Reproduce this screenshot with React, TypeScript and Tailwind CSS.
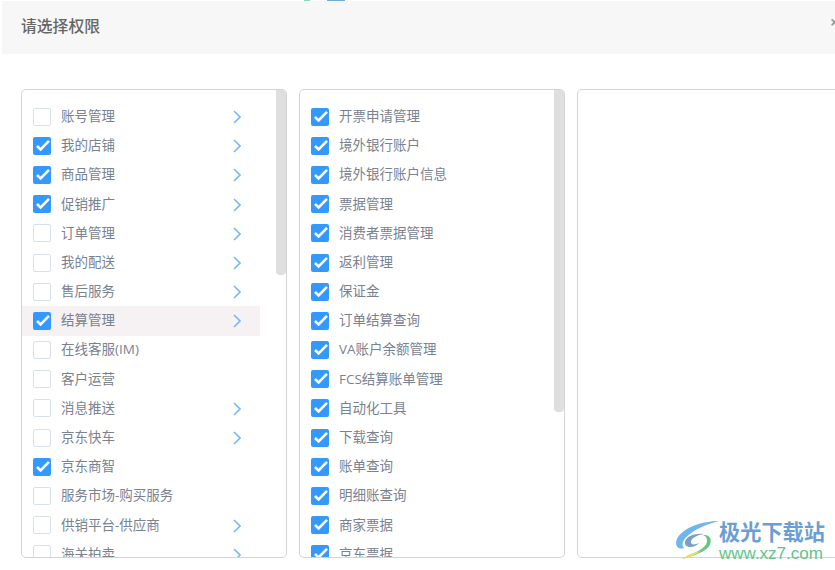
const leftItems = [
  { label: '账号管理', checked: false, arrow: true },
  { label: '我的店铺', checked: true, arrow: true },
  { label: '商品管理', checked: true, arrow: true },
  { label: '促销推广', checked: true, arrow: true },
  { label: '订单管理', checked: false, arrow: true },
  { label: '我的配送', checked: false, arrow: true },
  { label: '售后服务', checked: false, arrow: true },
  { label: '结算管理', checked: true, arrow: true, active: true },
  { label: '在线客服(IM)', checked: false, arrow: false },
  { label: '客户运营', checked: false, arrow: false },
  { label: '消息推送', checked: false, arrow: true },
  { label: '京东快车', checked: false, arrow: true },
  { label: '京东商智', checked: true, arrow: false },
  { label: '服务市场-购买服务', checked: false, arrow: false },
  { label: '供销平台-供应商', checked: false, arrow: true },
  { label: '海关拍卖', checked: false, arrow: true },
];

const midItems = [
  '开票申请管理',
  '境外银行账户',
  '境外银行账户信息',
  '票据管理',
  '消费者票据管理',
  '返利管理',
  '保证金',
  '订单结算查询',
  'VA账户余额管理',
  'FCS结算账单管理',
  '自动化工具',
  '下载查询',
  '账单查询',
  '明细账查询',
  '商家票据',
  '京东票据',
];

const Check = ({ checked }: { checked: boolean }) =>
  checked ? (
    <span className="flex h-[18px] w-[18px] shrink-0 items-center justify-center rounded-[2px] bg-[#3399ff]">
      <svg width="18" height="18" viewBox="0 0 18 18" fill="none">
        <path d="M4 9 L7.6 12.4 L16 3.8" stroke="#fff" strokeWidth="2.6" />
      </svg>
    </span>
  ) : (
    <span className="h-[18px] w-[18px] shrink-0 rounded-[2px] border border-[#d9e0ea] bg-white" />
  );

const Arrow = () => (
  <svg width="8" height="14" viewBox="0 0 8 14" fill="none" className="shrink-0">
    <path d="M1 1 L7 7 L1 13" stroke="#7ab8f5" strokeWidth="1.6" />
  </svg>
);

const Row = ({
  label,
  checked,
  arrow,
  active,
}: {
  label: string;
  checked: boolean;
  arrow?: boolean;
  active?: boolean;
}) => (
  <div className={`flex h-[29.2px] shrink-0 items-center pl-[11px] ${active ? 'bg-[#f6f1f3]' : ''}`}>
    <Check checked={checked} />
    <span className="ml-[10px] mb-[1px] whitespace-nowrap text-[13.5px] text-[#7a8290]">{label}</span>
    {arrow && (
      <span className="ml-auto mr-[19px] mt-[1px]">
        <Arrow />
      </span>
    )}
  </div>
);

const Panel = ({
  thumb,
  listWidth,
  children,
}: {
  thumb: string;
  listWidth: string;
  children: React.ReactNode;
}) => (
  <div className="flex h-[469px] w-[266px] shrink-0 overflow-hidden rounded-[5px] border border-[#d4d4d4] bg-white">
    <div className={`${listWidth} shrink-0 overflow-hidden pt-[12px]`}>{children}</div>
    <div className="ml-auto w-[10px] shrink-0">
      <div className={`${thumb} rounded-b-[4px] bg-[#dfdfdf]`} />
    </div>
  </div>
);

export default function App() {
  return (
    <div
      className="relative h-[570px] w-[835px] overflow-hidden bg-white"
      style={{ fontFamily: '"Open Sans", "Noto Sans CJK SC", "Liberation Sans", sans-serif' }}
    >
      {/* 顶部露出的一点图标 */}
      <div className="absolute left-[304px] top-0 h-px w-[6px] bg-[#7fdcc0]" />
      <div className="absolute left-[327px] top-0 h-px w-[18px] bg-[#6fa9de]" />

      <div className="ml-[2px] mt-px flex h-[53px] items-center bg-[#f7f7f7] pb-[2px] pl-[19px]">
        <span className="text-[15.8px] font-medium text-[#666666]">请选择权限</span>
      </div>

      <div className="ml-[21px] mt-[35px] flex gap-[12px]">
        <Panel thumb="h-[185px]" listWidth="w-[238px]">
          {leftItems.map((item) => (
            <Row key={item.label} {...item} />
          ))}
        </Panel>
        <Panel thumb="h-[322px]" listWidth="w-[238px]">
          {midItems.map((label) => (
            <Row key={label} label={label} checked />
          ))}
        </Panel>
        <div className="h-[469px] w-[290px] shrink-0 rounded-[5px] border border-[#d4d4d4] bg-white" />
      </div>

      {/* 水印 */}
      <div className="absolute left-[675px] top-[519px] flex items-start">
        <svg width="46" height="42" viewBox="0 0 46 42" fill="none">
          <path d="M44 2 C28 2 8 8 2 20 C-1 27 4 31 9 29 C3 23 16 9 44 2 Z" fill="#6fb6ea" />
          <path d="M10 23 C11 17 20 14 29 15 C22 16 16 19 16 23 C16 26 20 26 24 24 C19 30 9 29 10 23 Z" fill="#7a9fc9" />
          <path d="M28 16 C38 15 38 26 30 31 C24 35 15 38 7 40 C18 34 32 30 32 22 C32 19 31 17 28 16 Z" fill="#63c77c" />
          <path d="M7 40 C13 35 20 33 26 32 C20 36 13 39 7 40 Z" fill="#e5df6c" />
        </svg>
        <div className="ml-[-2px] flex flex-col">
          <span className="whitespace-nowrap text-[21.2px] font-bold leading-[25px] text-[#6b9ed6]">极光下载站</span>
          <span
            className="mt-px whitespace-nowrap text-[17px] leading-[18px] text-[#62c48a]"
            style={{ fontFamily: '"Liberation Sans", sans-serif' }}
          >
            www.xz7.com
          </span>
        </div>
      </div>

      {/* 关闭按钮，被窗口裁掉一半 */}
      <div className="absolute left-[830px] top-[14px] text-[16px] font-bold leading-[16px] text-[#9a9a9a]">×</div>
    </div>
  );
}
